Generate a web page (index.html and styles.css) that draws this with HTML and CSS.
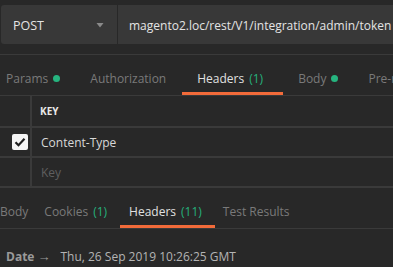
FILE: index.html
```html
<!DOCTYPE html>
<html lang="en">
  <head>
    <meta charset="UTF-8" />
    <meta name="viewport" content="width=device-width, initial-scale=1.0" />
    <title>Request</title>
    <link rel="stylesheet" href="styles.css">
  </head>
  <body>
    <header class="request">
      <div class="method">
        <span>POST</span>
        <svg class="caret" width="8" height="5" viewBox="0 0 8 5"><path d="M0.5 0h7L4 4.5z" fill="#8a8a8a"/></svg>
      </div>
      <div class="url">magento2.loc/rest/V1/integration/admin/token</div>
    </header>

    <nav class="tabs req-tabs">
      <div class="tab">Params <i class="dot"></i></div>
      <div class="tab">Authorization</div>
      <div class="tab active">Headers <span class="count">(1)</span></div>
      <div class="tab">Body <i class="dot"></i></div>
      <div class="tab">Pre-request Script</div>
    </nav>

    <section class="kv">
      <div class="row head">
        <div class="cell check"></div>
        <div class="cell key">KEY</div>
      </div>
      <div class="row">
        <div class="cell check">
          <span class="box">
            <svg width="12" height="10" viewBox="0 0 12 10"><path d="M1.5 5.2l3 3 6-6.4" fill="none" stroke="#1e1e1e" stroke-width="2.2"/></svg>
          </span>
        </div>
        <div class="cell">Content-Type</div>
      </div>
      <div class="row">
        <div class="cell check"></div>
        <div class="cell placeholder">Key</div>
      </div>
    </section>

    <nav class="tabs res-tabs">
      <div class="tab first">Body</div>
      <div class="tab">Cookies <span class="count">(1)</span></div>
      <div class="tab active">Headers <span class="count">(11)</span></div>
      <div class="tab">Test Results</div>
    </nav>

    <div class="resp-header">
      <b>Date</b>
      <span class="arrow">&rarr;</span>
      <span class="value">Thu, 26 Sep 2019 10:26:25 GMT</span>
    </div>
  </body>
</html>
```

FILE: styles.css
```css
body {
  margin: 0;
  background-color: #282828;
  font-family: "Open Sans", "Liberation Sans", sans-serif;
  font-size: 12px;
  color: #d8d8d8;
  overflow: hidden;
  width: 393px;
  height: 267px;
}

.request {
  display: flex;
  height: 55px;
  box-sizing: border-box;
  padding: 5px 0 0 1px;
  border-bottom: 1px solid #3a3a3a;
}
.method {
  width: 116px;
  height: 39px;
  box-sizing: border-box;
  display: flex;
  align-items: center;
  justify-content: space-between;
  padding: 1px 13px 0 12px;
  background-color: #383838;
  border-radius: 3px 0 0 3px;
  font-size: 12.5px;
  color: #e4e4e4;
}
.url {
  flex: 1;
  height: 39px;
  margin-left: 1px;
  padding: 1px 0 0 11px;
  box-sizing: border-box;
  display: flex;
  align-items: center;
  background-color: #383838;
  font-size: 12px;
  color: #e4e4e4;
  white-space: nowrap;
  overflow: hidden;
}

.tabs {
  display: flex;
  height: 40px;
  border-bottom: 1px solid #3a3a3a;
  white-space: nowrap;
  overflow: hidden;
}
.tab {
  display: flex;
  align-items: center;
  gap: 5px;
  flex-shrink: 0;
  box-sizing: border-box;
  padding: 9px 15px 0;
  color: #7a7a7a;
  border-bottom: 3px solid transparent;
}
.tab.active {
  color: #e0e0e0;
  border-bottom-color: #f26b3a;
}
.count {
  color: #26b07c;
  margin-right: 5px;
}
.dot {
  width: 7px;
  height: 7px;
  border-radius: 50%;
  background-color: #26b47f;
}
.req-tabs .tab:first-child {
  margin-left: -9px;
}
.req-tabs .tab:nth-child(2) {
  margin-right: 1px;
}

.res-tabs .tab {
  padding: 9px 8px 0;
}
.res-tabs .tab.first {
  margin-left: -8px;
}
.res-tabs .tab.active {
  padding-left: 9px;
}

.kv {
  display: flex;
  flex-direction: column;
}
.row {
  display: grid;
  grid-template-columns: 30px 1fr;
  height: 30px;
  box-sizing: border-box;
  border-bottom: 2px solid #3a3a3a;
}
.row.head {
  height: 32px;
}
.cell {
  display: flex;
  align-items: center;
  padding-left: 11px;
}
.cell.check {
  padding-left: 0;
  justify-content: flex-end;
  border-right: 2px solid #3a3a3a;
  margin-right: -2px;
  padding-right: 2px;
}
.key {
  font-size: 10px;
  font-weight: bold;
  color: #e8e8e8;
  padding-left: 10px;
}
.box {
  width: 16px;
  height: 16px;
  border-radius: 2px;
  background-color: #f4f4f4;
  display: flex;
  align-items: center;
  justify-content: center;
}
.placeholder {
  color: #5f5f5f;
}

.resp-header {
  display: flex;
  align-items: center;
  gap: 3px;
  padding: 18px 6px 0;
  color: #9a9a9a;
}
.arrow {
  font-size: 13px;
  margin-right: 7px;
}
.value {
  color: #b4b4b4;
}
```
